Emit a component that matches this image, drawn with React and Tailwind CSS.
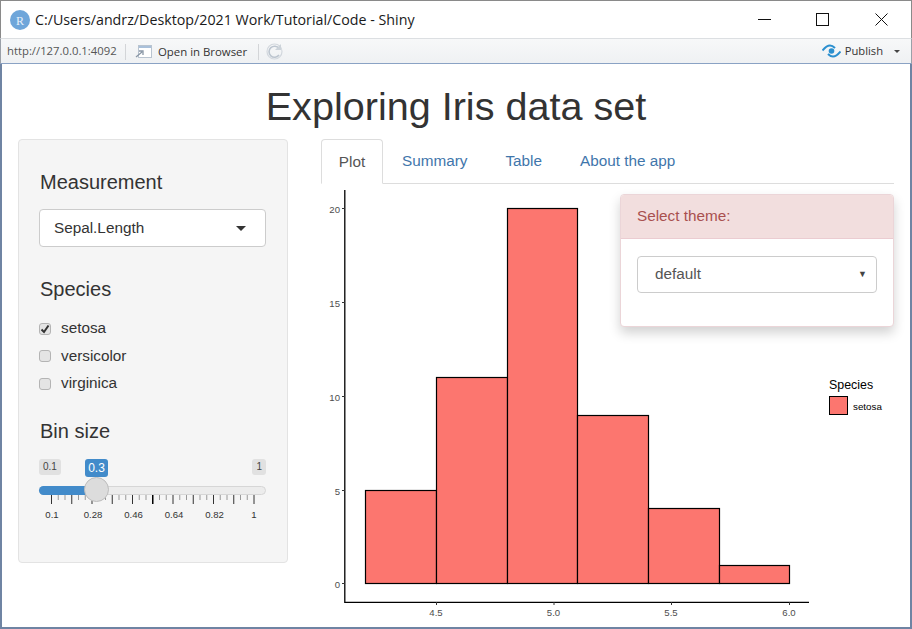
const sans = { fontFamily: '"Liberation Sans", Arial, sans-serif' };

const bars = [
  { x: 365.5, w: 71, top: 490.5 },
  { x: 436.5, w: 71, top: 377.5 },
  { x: 507.5, w: 70, top: 208.5 },
  { x: 577.5, w: 71, top: 415.5 },
  { x: 648.5, w: 71, top: 508.5 },
  { x: 719.5, w: 70, top: 565.5 },
];

const WindowBar = () => (
  <div className="h-[38px] shrink-0 flex items-center bg-white border-t border-x border-[#8a8a8a] pl-[9px]">
    <svg width="20" height="20" viewBox="0 0 20 20" className="shrink-0">
      <circle cx="10" cy="10" r="10" fill="#6fa6da" />
      <text x="10" y="14.5" textAnchor="middle" fontSize="12" fill="#e6f0fa" fontFamily="Liberation Serif">R</text>
    </svg>
    <span className="ml-[5px] text-[14.25px] text-[#1a1a1a] font-['Open_Sans',sans-serif] whitespace-nowrap">
      C:/Users/andrz/Desktop/2021 Work/Tutorial/Code - Shiny
    </span>
    <div className="ml-auto flex items-center">
      <svg width="13" height="13" viewBox="0 0 13 13" className="mr-[45px]">
        <path d="M0 6.5h13" stroke="#111" strokeWidth="1" />
      </svg>
      <svg width="13" height="13" viewBox="0 0 13 13" className="mr-[46px]">
        <rect x="0.5" y="0.5" width="12" height="12" fill="none" stroke="#111" strokeWidth="1" />
      </svg>
      <svg width="13" height="13" viewBox="0 0 13 13" className="mr-[23px]">
        <path d="M0.5 0.5l12 12M12.5 0.5l-12 12" stroke="#111" strokeWidth="1" />
      </svg>
    </div>
  </div>
);

const ToolBar = () => (
  <div className="h-[26px] shrink-0 flex items-center bg-gradient-to-b from-[#f7f8f9] to-[#eff1f3] border-t border-[#dcdfe2] border-b border-b-[#8aa2c4] border-x border-x-[#9aa0a8] pl-[6px] pt-[1px] font-['Open_Sans',sans-serif]">
    <span className="text-[11.3px] text-[#555] w-[118px] whitespace-nowrap">http://127.0.0.1:4092</span>
    <span className="w-px h-[16px] bg-[#d3d5d8]" />
    <svg width="17" height="15" viewBox="0 0 17 15" className="ml-[9px]">
      <rect x="3.5" y="1.5" width="13" height="12" fill="#fff" stroke="#b9c4d0" />
      <rect x="4" y="2" width="12" height="2" fill="#a9c0da" />
      <path d="M1 13l6-5M4 7h4v4" fill="none" stroke="#8a97a6" strokeWidth="1.3" />
    </svg>
    <span className="ml-[6px] text-[11.4px] text-[#333] whitespace-nowrap">Open in Browser</span>
    <span className="ml-[11px] w-px h-[16px] bg-[#d3d5d8]" />
    <svg width="17" height="17" viewBox="0 0 17 17" className="ml-[7px]">
      <circle cx="8.5" cy="8.5" r="7.5" fill="none" stroke="#d3d8de" strokeWidth="1.2" />
      <path d="M13 5.5a5.5 5.5 0 1 0 0 6.5" fill="none" stroke="#bcc5cf" strokeWidth="1.6" />
      <path d="M9 7h6V1z" fill="#ccd3da" />
    </svg>
    <div className="ml-auto flex items-center pr-[11px]">
      <svg width="19" height="14" viewBox="0 0 19 14">
        <path d="M0.5 6.5C3 3.5 4.5 1.5 8 1.5c2 0 3.5 1 5 2.5" fill="none" stroke="#2b8fcf" strokeWidth="2" />
        <path d="M18.5 7.5c-2.5 3-4 5-7.5 5-2 0-3.5-1-5-2.5" fill="none" stroke="#2b8fcf" strokeWidth="2" />
        <circle cx="9.5" cy="7" r="2.8" fill="#2b8fcf" />
      </svg>
      <span className="ml-[4px] text-[11.2px] text-[#333]">Publish</span>
      <span className="ml-[11px] w-0 h-0 border-x-[3px] border-x-transparent border-t-[3px] border-t-[#444]" />
    </div>
  </div>
);

const Check = ({ checked, label }) => (
  <div className="flex items-center h-[27.5px]">
    <span className="w-[12px] h-[12px] rounded-[3px] border border-[#b4b4b4] bg-[#e4e4e4] flex items-center justify-center">
      {checked && (
        <svg width="10" height="10" viewBox="0 0 10 10">
          <path d="M1.5 5.5l2.5 2.500 4.500-6.500" fill="none" stroke="#333" strokeWidth="2" />
        </svg>
      )}
    </span>
    <span className="ml-[10px] text-[15.3px] text-[#333]">{label}</span>
  </div>
);

const sliderTicks = Array.from({ length: 31 }, (_, i) => i);

const sliderLabels = [
  ['0.1', 'left-[1px]'],
  ['0.28', 'left-[42px]'],
  ['0.46', 'left-[82.5px]'],
  ['0.64', 'left-[123px]'],
  ['0.82', 'left-[163.5px]'],
  ['1', 'left-[203px]'],
];

const Slider = () => (
  <div className="relative h-[70px] w-[227px] mt-[14px]">
    <div className="flex justify-between">
      <span className="h-[16px] px-[4px] rounded-[3px] bg-[#e1e1e1] text-[10px] leading-[16px] text-[#444]">0.1</span>
      <span className="h-[16px] px-[4px] rounded-[3px] bg-[#e1e1e1] text-[10px] leading-[16px] text-[#444]">1</span>
    </div>
    <span className="absolute left-[46px] top-0 h-[18px] w-[23px] text-center rounded-[3px] bg-[#428bca] text-[12px] leading-[18px] text-white">0.3</span>
    <div className="absolute left-0 top-[27px] w-full h-[9px] rounded-full border border-[#d6d6d6] bg-[#ececec]" />
    <div className="absolute left-0 top-[27px] w-[50px] h-[9px] rounded-l-full bg-[#428bca]" />
    <svg width="227" height="10" viewBox="0 0 227 10" className="absolute left-0 top-[36px]">
      {sliderTicks.map((i) => {
        const x = 12.5 + i * 6.75;
        const major = i % 3 === 0;
        return (
          <line key={i} x1={x} x2={x} y1="0" y2={major ? 9 : 5} stroke={i === 15 ? '#000' : major ? '#333' : '#999'} strokeWidth={i === 15 ? 1.5 : 1} />
        );
      })}
    </svg>
    <div className="absolute left-[45px] top-[18px] w-[25px] h-[25px] rounded-full border border-[#bdbdbd] bg-[#dcdcdc]" />
    <div className="absolute top-[50px] left-0 w-full h-[12px] text-[9.6px] leading-[12px] text-[#333]">
      {sliderLabels.map(([t, pos]) => (
        <span key={t} className={`absolute ${pos} w-[24px] text-center`}>{t}</span>
      ))}
    </div>
  </div>
);

const Sidebar = () => (
  <div className="ml-[16px] w-[270px] h-[424px] shrink-0 rounded-[4px] border border-[#e3e3e3] bg-[#f5f5f5] pl-[20px] pr-[21px] pt-[28px] text-[#333]">
    <div className="ml-[1px] text-[20px] leading-[28px]">Measurement</div>
    <div className="mt-[13px] h-[38px] w-[227px] rounded-[4px] border border-[#ccc] bg-white flex items-center justify-between pl-[14px] pr-[19px]">
      <span className="mt-[1px] text-[15.3px]">Sepal.Length</span>
      <span className="w-0 h-0 border-x-[5px] border-x-transparent border-t-[5px] border-t-[#333]" />
    </div>
    <div className="ml-[1px] mt-[28px] text-[20px] leading-[28px]">Species</div>
    <div className="mt-[12px]">
      <Check checked label="setosa" />
      <Check label="versicolor" />
      <Check label="virginica" />
    </div>
    <div className="ml-[1px] mt-[19px] text-[20px] leading-[28px]">Bin size</div>
    <Slider />
  </div>
);

const Tabs = () => (
  <div className="flex h-[45px] border-b border-[#ddd] text-[15.3px]">
    <div className="h-[45px] w-[62px] rounded-t-[4px] border border-[#ddd] border-b-white bg-white text-[#555] flex items-center justify-center pt-[1px]">Plot</div>
    {['Summary', 'Table', 'About the app'].map((t, i) => (
      <div key={t} className={`h-[44px] flex items-center pt-[1px] text-[#3f76ab] ${i === 0 ? 'ml-[19px]' : 'ml-[38px]'}`}>{t}</div>
    ))}
  </div>
);

const Plot = () => (
  <svg width="589" height="430" viewBox="321 190 589 430" className="block" style={sans}>
    <path d="M344.8 190V602.300H809" fill="none" stroke="#000" strokeWidth="1.3" />
    {[[0, 583.5], [5, 490.5], [10, 396.5], [15, 302.5], [20, 208.5]].map(([v, y]) => (
      <g key={v}>
        <line x1="342" x2="345" y1={y} y2={y} stroke="#333" />
        <text x="340" y={y + 4} textAnchor="end" fontSize="9.6" fill="#4d4d4d">{v}</text>
      </g>
    ))}
    {[['4.5', 436], ['5.0', 553.500], ['5.5', 671], ['6.0', 789]].map(([v, x]) => (
      <g key={v}>
        <line x1={x + 0.5} x2={x + 0.5} y1="602" y2="605" stroke="#333" />
        <text x={x} y="616" textAnchor="middle" fontSize="9.6" fill="#4d4d4d">{v}</text>
      </g>
    ))}
    {bars.map((b) => (
      <rect key={b.x} x={b.x} y={b.top} width={b.w} height={583.5 - b.top} fill="#fc766f" stroke="#000" strokeWidth="1.2" />
    ))}
    <text x="829" y="389" fontSize="12.4" fill="#000">Species</text>
    <rect x="829.5" y="396.5" width="18" height="18" fill="#fc766f" stroke="#000" />
    <text x="853" y="410" fontSize="9.8" fill="#000">setosa</text>
  </svg>
);

const ThemePanel = () => (
  <div className="absolute left-[299px] top-[55px] w-[274px] h-[133px] rounded-[4px] border border-[#ebd5d8] bg-white shadow-[0_6px_12px_rgba(0,0,0,0.18)] overflow-hidden">
    <div className="h-[44px] bg-[#f2dede] border-b border-[#ebccd1] text-[#a9504f] text-[15.3px] flex items-center pl-[16px]">Select theme:</div>
    <div className="mt-[17px] mx-[16px] h-[37px] rounded-[4px] border border-[#ccc] flex items-center justify-between pl-[17px] pr-[9px] text-[#555]">
      <span className="text-[15.3px]">default</span>
      <span className="text-[9px] text-[#444]">▼</span>
    </div>
  </div>
);

const App = () => (
  <div className="w-[912px] h-[629px] flex flex-col bg-white overflow-hidden" style={sans}>
    <WindowBar />
    <ToolBar />
    <div className="flex-1 border-x-2 border-b-2 border-[#6f84a3] min-h-0">
      <h1 className="h-[75px] pt-[15px] text-center text-[39.6px] leading-[55px] text-[#333]">Exploring Iris data set</h1>
      <div className="flex">
        <Sidebar />
        <div className="relative ml-[33px] w-[573px]">
          <Tabs />
          <div className="mt-[6px]">
            <Plot />
          </div>
          <ThemePanel />
        </div>
      </div>
    </div>
  </div>
);

export default App;
